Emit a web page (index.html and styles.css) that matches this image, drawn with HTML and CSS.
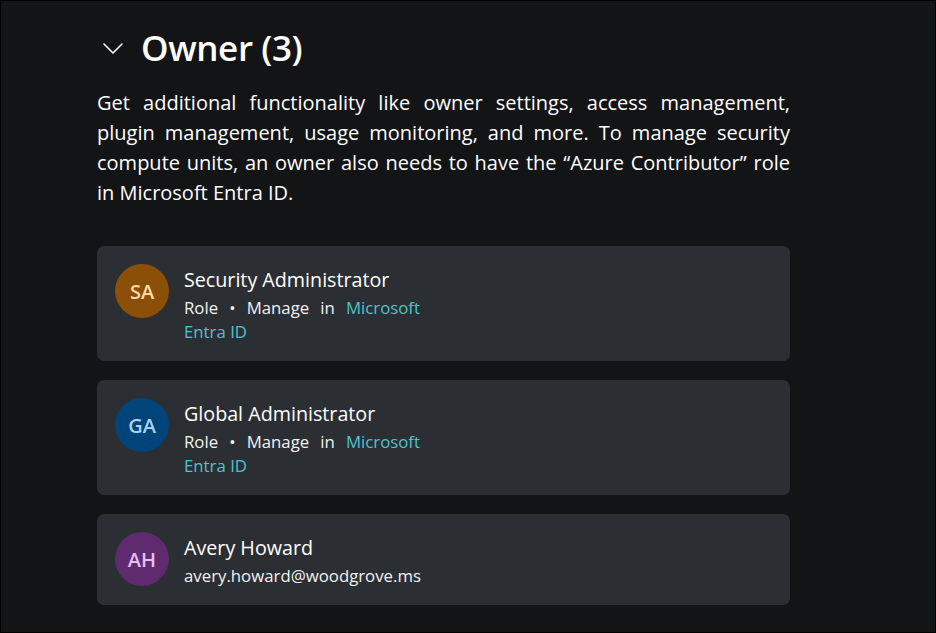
FILE: index.html
```html
<!DOCTYPE html>
<html lang="en">
<head>
<meta charset="utf-8">
<title>Owner</title>
<link rel="stylesheet" href="styles.css">
</head>
<body>
<div class="frame">
  <section class="section">
    <div class="section-head">
      <svg class="chevron" width="22" height="22" viewBox="0 0 22 22" aria-hidden="true">
        <path d="M2 7 L11 16 L20 7" fill="none" stroke="#ffffff" stroke-width="1.6" stroke-linecap="round" stroke-linejoin="round"/>
      </svg>
      <h2 class="section-title">Owner (3)</h2>
    </div>
    <p class="section-desc">Get additional functionality like owner settings, access management, plugin management, usage monitoring, and more. To manage security compute units, an owner also needs to have the “Azure Contributor” role in Microsoft Entra ID.</p>

    <ul class="member-list">
      <li class="member-card">
        <div class="avatar avatar-sa">SA</div>
        <div class="member-info">
          <div class="member-name">Security Administrator</div>
          <div class="member-sub member-sub-role">Role • Manage in <a class="link" href="#">Microsoft Entra ID</a></div>
        </div>
      </li>
      <li class="member-card">
        <div class="avatar avatar-ga">GA</div>
        <div class="member-info">
          <div class="member-name">Global Administrator</div>
          <div class="member-sub member-sub-role">Role • Manage in <a class="link" href="#">Microsoft Entra ID</a></div>
        </div>
      </li>
      <li class="member-card">
        <div class="avatar avatar-ah">AH</div>
        <div class="member-info">
          <div class="member-name">Avery Howard</div>
          <div class="member-sub">avery.howard@woodgrove.ms</div>
        </div>
      </li>
    </ul>
  </section>
</div>
</body>
</html>
```

FILE: styles.css
```css
html, body {
  margin: 0;
  padding: 0;
  background: #000;
}

body {
  font-family: "Open Sans", "Noto Sans", "Liberation Sans", sans-serif;
  color: #ffffff;
}

.frame {
  box-sizing: border-box;
  width: 936px;
  height: 633px;
  border: 1px solid #000;
  background: #131416;
  overflow: hidden;
}

.section {
  width: 693px;
  margin-left: 96px;
  padding-top: 24px;
}

.section-head {
  display: flex;
  align-items: center;
  gap: 17px;
  padding-left: 5px;
  height: 46px;
}

.chevron {
  flex: none;
}

.section-title {
  margin: 0;
  font-size: 35px;
  font-weight: 600;
  letter-spacing: -0.4px;
  line-height: 46px;
}

.section-desc {
  margin: 17px 0 0;
  font-size: 20px;
  line-height: 30px;
  text-align: justify;
  color: #ffffff;
}

.member-list {
  list-style: none;
  margin: 38px 0 0;
  padding: 0;
  display: flex;
  flex-direction: column;
  gap: 19px;
}

.member-card {
  display: flex;
  align-items: flex-start;
  gap: 15px;
  padding: 18px 18px 17px;
  background: #2b2f33;
  border-radius: 7px;
}

.avatar {
  flex: none;
  width: 54px;
  height: 54px;
  border-radius: 50%;
  display: flex;
  align-items: center;
  justify-content: center;
  font-size: 20px;
  font-weight: 600;
}

.avatar-sa { background: #8c4f07; color: #fcdba8; }
.avatar-ga { background: #004479; color: #a9d4f4; }
.avatar-ah { background: #5e2b6f; color: #e6bdf0; }

.member-info {
  padding-top: 2px;
}

.member-name {
  font-size: 19.7px;
  line-height: 28px;
  margin-bottom: 2px;
  color: #ffffff;
}

.member-sub {
  font-size: 16.8px;
  line-height: 24px;
  color: #f2f2f2;
}

.member-sub-role {
  width: 236px;
  text-align: justify;
}

.link {
  color: #4ec3cd;
  text-decoration: none;
}
```
